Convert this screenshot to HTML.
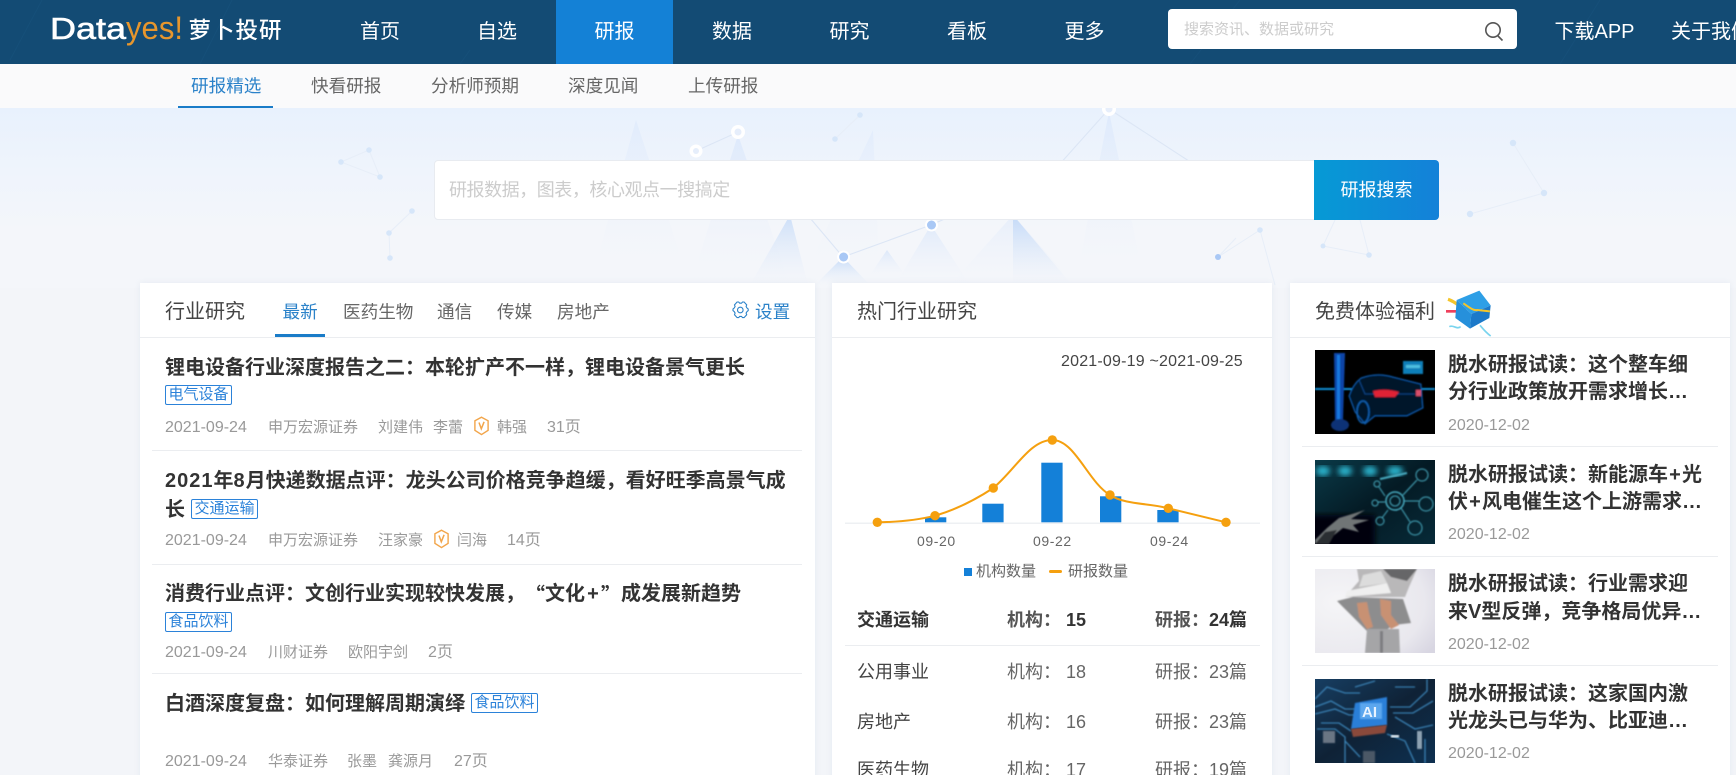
<!DOCTYPE html>
<html lang="zh-CN"><head><meta charset="utf-8"><title>研报</title>
<style>
*{box-sizing:border-box;margin:0;padding:0}
html,body{width:1736px;height:775px;overflow:hidden;background:#f3f5f9}
body{position:relative;font-family:"Liberation Sans","Noto Sans CJK SC",sans-serif;color:#333}
.a{position:absolute;white-space:nowrap}
.n{position:absolute;top:14px;line-height:36px;font-size:20px;color:#fff;white-space:nowrap}
.s{position:absolute;top:73px;line-height:26px;font-size:17.6px;color:#666;white-space:nowrap}
.card{position:absolute;top:283px;height:500px;background:#fff;box-shadow:0 0 6px rgba(150,170,200,.14)}
.hl{position:absolute;height:1px;background:#ebedf0}
.h{position:absolute;top:298px;font-size:20px;line-height:28px;color:#444;white-space:nowrap}
.tb{position:absolute;top:299px;font-size:17.6px;line-height:26px;color:#666;white-space:nowrap}
.t{position:absolute;font-size:20px;line-height:28px;font-weight:700;color:#333;white-space:nowrap;margin-top:1px}
.t i{font-style:normal;letter-spacing:1px}
.t b{display:inline-block;text-align:center}
.t u{text-decoration:none;font-family:"Noto Sans CJK SC",sans-serif}
.tag{position:absolute;width:67px;height:20px;border:1px solid #2b82d9;border-radius:2px;color:#2b82d9;font-size:15px;line-height:18px;text-align:center;background:#fff;white-space:nowrap}
.m{position:absolute;font-size:15px;line-height:20px;color:#999;white-space:nowrap;margin-top:1px}
.d{font-size:16px}
.r{position:absolute;font-size:18px;line-height:26px;color:#666;white-space:nowrap}
.im{position:absolute;left:1315px;width:120px;height:84px}
</style></head><body>

<!-- header -->
<div class="a" style="left:0;top:0;width:1736px;height:64px;background:#134b74"></div>
<div class="a" style="left:556px;top:0;width:117px;height:64px;background:#1481d6"></div>
<svg class="a" style="left:0;top:0" width="1736" height="64">
<g stroke="#1d5884" stroke-width="1" fill="none" opacity=".35"><path d="M10 60L42 0M200 64L232 0M460 64L470 50M1190 64L1240 0M1560 64L1600 0"/></g>
<text x="50" y="39" font-family="Liberation Sans" font-size="31" fill="#fff" stroke="#fff" stroke-width=".6" textLength="76" lengthAdjust="spacingAndGlyphs">Data</text>
<text x="126" y="39" font-family="Liberation Sans" font-size="32" fill="#e6962d" textLength="57" lengthAdjust="spacingAndGlyphs">yes!</text>
<text x="188.500" y="38" font-family="Noto Sans CJK SC" font-size="22.500" font-weight="500" fill="#fff" textLength="93">萝卜投研</text>
</svg>
<span class="n" style="left:360px">首页</span>
<span class="n" style="left:477px">自选</span>
<span class="n" style="left:594.500px">研报</span>
<span class="n" style="left:712px">数据</span>
<span class="n" style="left:829.500px">研究</span>
<span class="n" style="left:947px">看板</span>
<span class="n" style="left:1064.500px">更多</span>
<div class="a" style="left:1168px;top:9px;width:349px;height:40px;background:#fff;border-radius:4px"></div>
<span class="a" style="left:1184px;top:19px;font-size:15px;line-height:22px;color:#ccc">搜索资讯、数据或研究</span>
<svg class="a" style="left:1480px;top:18px" width="28" height="28" fill="none" stroke="#555" stroke-width="1.600"><circle cx="13" cy="12" r="7.200"/><path d="M18 18l4.500 4.500"/></svg>
<span class="n" style="left:1554.500px">下载APP</span>
<span class="n" style="left:1671px">关于我们</span>

<!-- subnav -->
<div class="a" style="left:0;top:64px;width:1736px;height:44px;background:#fafafb"></div>
<span class="s" style="left:191px;color:#2b82c9">研报精选</span>
<div class="a" style="left:178px;top:106px;width:95px;height:2px;background:#1a7cc8"></div>
<span class="s" style="left:311px">快看研报</span>
<span class="s" style="left:431px">分析师预期</span>
<span class="s" style="left:568px">深度见闻</span>
<span class="s" style="left:688px">上传研报</span>

<!-- hero -->
<svg class="a" style="left:0;top:108px" width="1736" height="180" viewBox="0 108 1736 180">
<defs>
<linearGradient id="bg" x1="0" y1="0" x2="0" y2="1"><stop offset="0" stop-color="#e8f1fd"/><stop offset=".35" stop-color="#eff4fc"/><stop offset=".7" stop-color="#f4f6fa"/><stop offset="1" stop-color="#f4f6fa"/></linearGradient>
<linearGradient id="tr" x1="0" y1="0" x2="0" y2="1"><stop offset="0" stop-color="#cfe0fa" stop-opacity=".7"/><stop offset=".85" stop-color="#e6eef9" stop-opacity=".05"/><stop offset="1" stop-color="#e6eef9" stop-opacity="0"/></linearGradient>
<linearGradient id="tr2" x1="0" y1="0" x2="0" y2="1"><stop offset="0" stop-color="#bfd7f8" stop-opacity=".9"/><stop offset="1" stop-color="#e6eef9" stop-opacity="0"/></linearGradient>
</defs>
<rect x="0" y="108" width="1736" height="180" fill="url(#bg)"/>
<g fill="url(#tr)">
<path d="M636 120L590 285H690z" opacity=".45"/>
<path d="M738 135L690 285H790z" opacity=".7"/>
<path d="M873 130L800 285H880z" opacity=".4"/>
<path d="M931 225L895 285H970z" opacity=".8"/>
<path d="M1013 215L950 285H1075z" opacity=".5"/>
<path d="M1109 112L1075 285H1145z" opacity=".6"/>
</g>
<g fill="url(#tr2)">
<path d="M790 215L750 285H808z" opacity=".85"/>
<path d="M843 257L815 285H870z"/>
<path d="M1013 215L1013 285H1072z"/>
<path d="M887 250L870 275H905z" opacity=".5"/>
</g>
<g stroke="#dce6f5" stroke-width="1.100" fill="none">
<path d="M696 151L738 132"/><path d="M1109 109L1050 175M1109 109L1215 178"/>
<path d="M810 218L843 257L931 225L965 210"/>
</g>
<g stroke="#e7eef8" stroke-width="1" fill="none">
<path d="M835 139L860 115"/>
<path d="M1218 257L1236 238"/>
<path d="M369 150L341 162L380 177L369 150"/><path d="M412 211L389 233L390 258"/>
<path d="M1513 143L1544 193L1470 214"/><path d="M1218 257L1260 230L1275 285"/>
<path d="M1335 220L1323 246L1369 255L1360 220"/>
</g>
<g fill="#fff"><circle cx="696" cy="151" r="6.500"/><circle cx="738" cy="132" r="7"/><circle cx="1109" cy="109" r="7"/><circle cx="843.600" cy="257" r="6.500"/><circle cx="931.500" cy="225" r="6.500"/></g>
<g fill="#e6eefb"><circle cx="696" cy="151" r="3"/><circle cx="738" cy="132" r="3.500"/><circle cx="1109" cy="109" r="3.500"/></g>
<g fill="#a9c8f5"><circle cx="843.600" cy="257" r="4.500"/><circle cx="931.500" cy="225" r="4.500"/><circle cx="1218" cy="257" r="3"/></g>
<g fill="#d6e6f9"><circle cx="369" cy="150" r="2.800"/><circle cx="341" cy="162" r="2.800"/><circle cx="380" cy="177" r="2.800"/><circle cx="412" cy="211" r="2.800"/><circle cx="389" cy="233" r="2.800"/><circle cx="390" cy="258" r="2.800"/><circle cx="1513" cy="143" r="3.200"/><circle cx="1544" cy="193" r="3.200"/><circle cx="1470" cy="214" r="3.200"/><circle cx="1260" cy="230" r="2.800"/><circle cx="1323" cy="246" r="2.500"/><circle cx="1369" cy="255" r="2.800"/><circle cx="835" cy="139" r="2.800"/><circle cx="860" cy="115" r="2.800"/></g>
</svg>
<div class="a" style="left:434px;top:160px;width:881px;height:60px;background:#fff;border:1px solid #e8ebf0;border-radius:4px 0 0 4px"></div>
<span class="a" style="left:449px;top:177px;font-size:18px;line-height:26px;color:#ccc;letter-spacing:-.45px">研报数据，图表，核心观点一搜搞定</span>
<div class="a" style="left:1314px;top:160px;width:125px;height:60px;background:linear-gradient(90deg,#069ad5,#1481d8);border-radius:0 4px 4px 0;color:#fff;font-size:18px;line-height:60px;text-align:center">研报搜索</div>

<!-- cards -->
<div class="card" style="left:140px;width:675px"></div>
<div class="card" style="left:832px;width:440px"></div>
<div class="card" style="left:1290px;width:440px"></div>
<div class="hl" style="left:140px;top:337px;width:675px"></div>
<div class="hl" style="left:832px;top:337px;width:440px"></div>
<div class="hl" style="left:1290px;top:337px;width:440px"></div>

<!-- card 1 -->
<span class="h" style="left:165px">行业研究</span>
<span class="tb" style="left:282.500px;color:#2b82c9">最新</span>
<div class="a" style="left:275px;top:334px;width:50px;height:3px;background:#1a7cc8"></div>
<span class="tb" style="left:343px">医药生物</span>
<span class="tb" style="left:437px">通信</span>
<span class="tb" style="left:497px">传媒</span>
<span class="tb" style="left:557px">房地产</span>
<svg class="a" style="left:730px;top:300px" width="20" height="20" viewBox="0 0 20 20" fill="none" stroke="#2b82c9" stroke-width="1.100"><path d="M6.500 2.200h1.600l1 1.200h1.800l1-1.200h1.600l2.600 2.900-.6 1.600.9 1.500 1.200 1v1.600l-1.200 1-.9 1.500.6 1.600-2.600 2.900h-1.600l-1-1.200H9.100l-1 1.200H6.500l-2.600-2.900.6-1.600-.9-1.500-1.200-1V9.200l1.200-1 .9-1.500-.6-1.600z" transform="translate(.6 -.2)"/><circle cx="10.300" cy="10" r="2.800"/></svg>
<span class="tb" style="left:755px;color:#2b82c9">设置</span>

<span class="t" style="left:165px;top:353px">锂电设备行业深度报告之二：本轮扩产不一样，锂电设备景气更长</span>
<span class="tag" style="left:165px;top:385px">电气设备</span>
<span class="m d" style="left:165px;top:417px">2021-09-24</span>
<span class="m" style="left:268px;top:417px">申万宏源证券</span>
<span class="m" style="left:378px;top:417px">刘建伟</span>
<span class="m" style="left:433px;top:417px">李蕾</span>
<svg class="a" style="left:473px;top:416px" width="17" height="20" viewBox="0 0 17 20" fill="none" stroke="#f2a54a" stroke-width="1.400"><path d="M8.500 1.200l6.600 3.600v9.600l-6.600 4.200-6.600-4.200V4.800z"/><path d="M6 6.500l2.300 6.300 2.800-7" stroke-width="1.500"/></svg>
<span class="m" style="left:497px;top:417px">韩强</span>
<span class="m d" style="left:547px;top:417px">31页</span>
<div class="hl" style="left:152px;top:450px;width:650px"></div>

<span class="t" style="left:165px;top:466px"><i>2021</i>年<i>8</i>月快递数据点评：龙头公司价格竞争趋缓，看好旺季高景气成</span>
<span class="t" style="left:165px;top:495px">长</span>
<span class="tag" style="left:191px;top:499px">交通运输</span>
<span class="m d" style="left:165px;top:530px">2021-09-24</span>
<span class="m" style="left:268px;top:530px">申万宏源证券</span>
<span class="m" style="left:378px;top:530px">汪家豪</span>
<svg class="a" style="left:433px;top:529px" width="17" height="20" viewBox="0 0 17 20" fill="none" stroke="#f2a54a" stroke-width="1.400"><path d="M8.500 1.200l6.600 3.600v9.600l-6.600 4.200-6.600-4.200V4.800z"/><path d="M6 6.500l2.300 6.300 2.800-7" stroke-width="1.500"/></svg>
<span class="m" style="left:457px;top:530px">闫海</span>
<span class="m d" style="left:507px;top:530px">14页</span>
<div class="hl" style="left:152px;top:564px;width:650px"></div>

<span class="t" style="left:165px;top:579px">消费行业点评：文创行业实现较快发展，</span>
<span class="t" style="left:525px;top:579px"><u>“</u></span>
<span class="t" style="left:545px;top:579px">文化</span>
<span class="t" style="left:585px;top:579px;width:16px;text-align:center">+</span>
<span class="t" style="left:601px;top:579px"><u>”</u></span>
<span class="t" style="left:621px;top:579px">成发展新趋势</span>
<span class="tag" style="left:165px;top:612px">食品饮料</span>
<span class="m d" style="left:165px;top:642px">2021-09-24</span>
<span class="m" style="left:268px;top:642px">川财证券</span>
<span class="m" style="left:348px;top:642px">欧阳宇剑</span>
<span class="m d" style="left:428px;top:642px">2页</span>
<div class="hl" style="left:152px;top:673px;width:650px"></div>

<span class="t" style="left:165px;top:689px">白酒深度复盘：如何理解周期演绎</span>
<span class="tag" style="left:471px;top:693px">食品饮料</span>
<span class="m d" style="left:165px;top:751px">2021-09-24</span>
<span class="m" style="left:268px;top:751px">华泰证券</span>
<span class="m" style="left:347px;top:751px">张墨</span>
<span class="m" style="left:388px;top:751px">龚源月</span>
<span class="m d" style="left:454px;top:751px">27页</span>

<!-- card 2 -->
<span class="h" style="left:857px">热门行业研究</span>
<span class="a" style="left:1061px;top:352px;font-size:16px;line-height:20px;color:#444;letter-spacing:.2px">2021-09-19 ~2021-09-25</span>
<svg class="a" style="left:832px;top:420px" width="440" height="110" viewBox="832 420 440 110">
<rect x="845" y="522.500" width="415" height="1.500" fill="#eef0f3"/>
<g fill="#1480d8"><rect x="925" y="517.300" width="21.300" height="5"/><rect x="982.300" y="503.700" width="21.300" height="18.600"/><rect x="1041.300" y="462.700" width="21.300" height="59.600"/><rect x="1100" y="496.300" width="21.300" height="26"/><rect x="1157.300" y="510" width="21.300" height="12.300"/></g>
<path d="M877.300 522.300C900 522 918 520 935 515.700C955 510 975 500 993.300 488C1015 470 1030 440 1052.300 440C1075 440 1088 482 1110 495C1125 505 1150 503 1168.300 508.300L1226 522.300" fill="none" stroke="#f5a00f" stroke-width="2"/>
<g fill="#f5a00f"><circle cx="877.300" cy="522.300" r="4.700"/><circle cx="935" cy="515.700" r="4.700"/><circle cx="993.300" cy="488" r="4.700"/><circle cx="1052.300" cy="440" r="4.700"/><circle cx="1110" cy="495" r="4.700"/><circle cx="1168.300" cy="508.300" r="4.700"/><circle cx="1226" cy="522.300" r="4.700"/></g>
</svg>
<span class="a" style="left:917px;top:531px;font-size:14px;line-height:20px;color:#666;letter-spacing:.6px">09-20</span>
<span class="a" style="left:1033px;top:531px;font-size:14px;line-height:20px;color:#666;letter-spacing:.6px">09-22</span>
<span class="a" style="left:1150px;top:531px;font-size:14px;line-height:20px;color:#666;letter-spacing:.6px">09-24</span>
<div class="a" style="left:964px;top:568px;width:8px;height:8px;background:#1480d8"></div>
<span class="a" style="left:976px;top:561px;font-size:15px;line-height:22px;color:#666">机构数量</span>
<div class="a" style="left:1049px;top:570px;width:13px;height:3px;background:#f5a00f;border-radius:2px"></div>
<span class="a" style="left:1068px;top:561px;font-size:15px;line-height:22px;color:#666">研报数量</span>

<span class="r" style="left:857px;top:607px;font-weight:700;color:#333">交通运输</span>
<span class="r" style="left:1007px;top:607px;font-weight:700;color:#555">机构：<span style="color:#333">&nbsp;15</span></span>
<span class="r" style="left:1155px;top:607px;font-weight:700;color:#555">研报：<span style="color:#333">24篇</span></span>
<div class="hl" style="left:845px;top:645px;width:415px"></div>
<span class="r" style="left:857px;top:659px;color:#444">公用事业</span>
<span class="r" style="left:1007px;top:659px">机构：&nbsp;18</span>
<span class="r" style="left:1155px;top:659px">研报：23篇</span>
<span class="r" style="left:857px;top:709px;color:#444">房地产</span>
<span class="r" style="left:1007px;top:709px">机构：&nbsp;16</span>
<span class="r" style="left:1155px;top:709px">研报：23篇</span>
<span class="r" style="left:857px;top:757px;color:#444">医药生物</span>
<span class="r" style="left:1007px;top:757px">机构：&nbsp;17</span>
<span class="r" style="left:1155px;top:757px">研报：19篇</span>

<!-- card 3 -->
<span class="h" style="left:1315px">免费体验福利</span>
<svg class="a" style="left:1440px;top:286px" width="60" height="52" viewBox="0 0 180 156">
<g filter="url(#b)">
<path d="M24 40C40 45 60 60 75 72" stroke="#f5c52c" stroke-width="10" fill="none"/>
<path d="M18 76H48" stroke="#ef3f5b" stroke-width="8"/>
<path d="M50 42L118 14L152 58L94 84z" fill="#2f9fe6"/>
<path d="M50 42L94 84L90 128L46 96z" fill="#2690db"/>
<path d="M94 84L152 58L148 96L90 128z" fill="#1a79c9"/>
<path d="M70 52C85 62 100 75 112 72L150 76" stroke="#f5c52c" stroke-width="6" fill="none"/>
<path d="M28 122C40 115 50 132 62 122M120 118C130 130 138 140 152 150" stroke="#7ad4ee" stroke-width="5" fill="none"/>
</g>
</svg>

<!-- image 1 -->
<svg class="im" style="top:350px" viewBox="0 0 120 84"><defs><filter id="b"><feGaussianBlur stdDeviation=".7"/></filter><filter id="b2"><feGaussianBlur stdDeviation="3"/></filter></defs>
<rect width="120" height="84" fill="#000"/>
<g filter="url(#b)">
<rect x="0" y="38" width="120" height="2" fill="#0a8fd8"/>
<path d="M19 3H30L28 70H20z" fill="#0a45a8"/>
<rect x="22" y="5" width="3" height="68" fill="#1579e0"/>
<ellipse cx="25" cy="75" rx="9" ry="6" fill="#0a3276"/>
<path d="M34 46Q38 34 46 28Q62 22 78 27L106 34L108 58L92 66H60L50 74L40 62z" fill="#04122a" stroke="#0c5fb5" stroke-width="1"/>
<path d="M44 30L50 44H100" fill="none" stroke="#0c4f9a" stroke-width=".8"/>
<path d="M58 41Q70 38 84 42L80 47H60z" fill="#e02236"/>
<rect x="101" y="40" width="5" height="6" fill="#d8506a"/>
<ellipse cx="48" cy="62" rx="6" ry="11" fill="none" stroke="#0c5fb0" stroke-width="1.500"/>
<rect x="88" y="11" width="20" height="13" fill="#0a7fb8"/>
<rect x="91" y="15" width="14" height="3" fill="#5ed0ea" opacity=".8"/>
</g></svg>

<!-- image 2 -->
<svg class="im" style="top:460px" viewBox="0 0 120 84"><defs><linearGradient id="g2" x1="0" y1="0" x2="1" y2="1"><stop offset="0" stop-color="#0a3a48"/><stop offset=".5" stop-color="#041a24"/><stop offset="1" stop-color="#072a38"/></linearGradient></defs>
<rect width="120" height="84" fill="url(#g2)"/>
<rect x="-5" y="55" width="65" height="35" fill="#01060a" filter="url(#b2)"/>
<g fill="#2bb2cc" filter="url(#b2)"><ellipse cx="8" cy="11" rx="7" ry="5"/><ellipse cx="30" cy="11" rx="7" ry="5"/><ellipse cx="55" cy="11" rx="7" ry="5"/><ellipse cx="80" cy="11" rx="8" ry="5"/></g>
<g fill="none" stroke="#48adc2" stroke-width="1" filter="url(#b)">
<circle cx="80" cy="41" r="9" stroke-width="1.500"/><circle cx="80" cy="41" r="5"/><circle cx="107" cy="15" r="6"/><circle cx="111" cy="44" r="7"/><circle cx="100" cy="68" r="7"/><circle cx="62" cy="24" r="3"/><circle cx="60" cy="43" r="3"/><circle cx="65" cy="61" r="4"/>
<path d="M88 35L102 20M89 41H104M86 48L95 62M70 36L64 27M70 42H63M73 50L67 58"/>
<path d="M65 19L92 13" stroke-width="2"/></g>
<g filter="url(#b)"><path d="M0 80L12 68L24 58L50 50L36 59L54 60L38 65L44 72L28 68L8 84H0z" fill="#6f7476"/><path d="M0 84L10 72L22 70L14 84z" fill="#2b2e30"/></g>
</svg>

<!-- image 3 -->
<svg class="im" style="top:569px" viewBox="0 0 120 84"><defs><radialGradient id="g3" cx=".2" cy=".4" r=".95"><stop offset="0" stop-color="#f5f5f7"/><stop offset=".75" stop-color="#e9e8ee"/><stop offset="1" stop-color="#d8d6e2"/></radialGradient></defs>
<rect width="120" height="84" fill="url(#g3)"/>
<g filter="url(#b)">
<path d="M42 0H102L94 18L90 28H30L44 12z" fill="#b9b8b9"/>
<path d="M32 22L72 14L76 24L30 28z" fill="#efefef"/>
<path d="M48 6L66 2L72 14L44 18z" fill="#dcdcdc"/>
<path d="M22 32L38 28L88 30L96 54L78 56L70 62H52L40 50z" fill="#8d8d8e"/>
<path d="M50 84L52 60H84L85 84z" fill="#a5a5a7"/>
<rect x="65" y="62" width="3" height="22" fill="#7d7d80"/>
<path d="M42 34L52 33L54 44L58 58L52 60L44 48z" fill="#c89173"/>
<path d="M65 30L76 32L76 46L84 56L76 60L66 46z" fill="#c89173"/>
<path d="M68 0H102L92 12L76 8z" fill="#666668"/>
</g></svg>

<!-- image 4 -->
<svg class="im" style="top:679px" viewBox="0 0 120 84"><defs><linearGradient id="g4" x1="0" y1="0" x2="1" y2="1"><stop offset="0" stop-color="#173e62"/><stop offset=".5" stop-color="#0f2236"/><stop offset="1" stop-color="#0e3050"/></linearGradient></defs>
<rect width="120" height="84" fill="url(#g4)"/>
<g fill="none" stroke="#3f8fc6" stroke-width="1.100" filter="url(#b)">
<path d="M0 20L12 8L30 14H45M0 28L16 22L30 30H40M0 35L20 30L34 36H40M2 50H20L30 58V84M6 44H24L36 52M40 8L60 2M75 28H95L112 12V0M78 34H98L118 22M80 38L100 50L118 46M72 55L90 62L100 84M110 60V84M30 62L45 78M80 8H100"/>
</g>
<rect x="8" y="52" width="12" height="12" fill="#6a7684" filter="url(#b)"/>
<rect x="48" y="72" width="12" height="12" fill="#4c5966" filter="url(#b)"/>
<rect x="76" y="56" width="8" height="2.500" fill="#dfe8ef" filter="url(#b)"/>
<rect x="102" y="52" width="5" height="18" fill="#8ea2b2" filter="url(#b)"/>
<path d="M40 24L72 18L72 46L36 50z" fill="#2b7fd8" filter="url(#b)"/>
<rect x="45" y="24" width="22" height="16" fill="#5ba7ee" filter="url(#b)"/>
<path d="M36 50L72 46L70 54L38 58z" fill="#8a4a3a" filter="url(#b)"/>
<text x="47" y="38" font-family="Liberation Sans" font-size="15" font-weight="700" fill="#e8f3ff">AI</text>
</svg>

<span class="t" style="left:1448px;top:350px">脱水研报试读：这个整车细</span>
<span class="t" style="left:1448px;top:377px">分行业政策放开需求增长…</span>
<span class="m d" style="left:1448px;top:415px">2020-12-02</span>
<div class="hl" style="left:1302px;top:446px;width:416px"></div>

<span class="t" style="left:1448px;top:460px">脱水研报试读：新能源车<b style="width:14px">+</b>光</span>
<span class="t" style="left:1448px;top:487px">伏<b style="width:14px">+</b>风电催生这个上游需求…</span>
<span class="m d" style="left:1448px;top:524px">2020-12-02</span>
<div class="hl" style="left:1302px;top:556px;width:416px"></div>

<span class="t" style="left:1448px;top:569px">脱水研报试读：行业需求迎</span>
<span class="t" style="left:1448px;top:597px">来V型反弹，竞争格局优异…</span>
<span class="m d" style="left:1448px;top:634px">2020-12-02</span>
<div class="hl" style="left:1302px;top:665px;width:416px"></div>

<span class="t" style="left:1448px;top:679px">脱水研报试读：这家国内激</span>
<span class="t" style="left:1448px;top:706px">光龙头已与华为、比亚迪…</span>
<span class="m d" style="left:1448px;top:743px">2020-12-02</span>
</body></html>
